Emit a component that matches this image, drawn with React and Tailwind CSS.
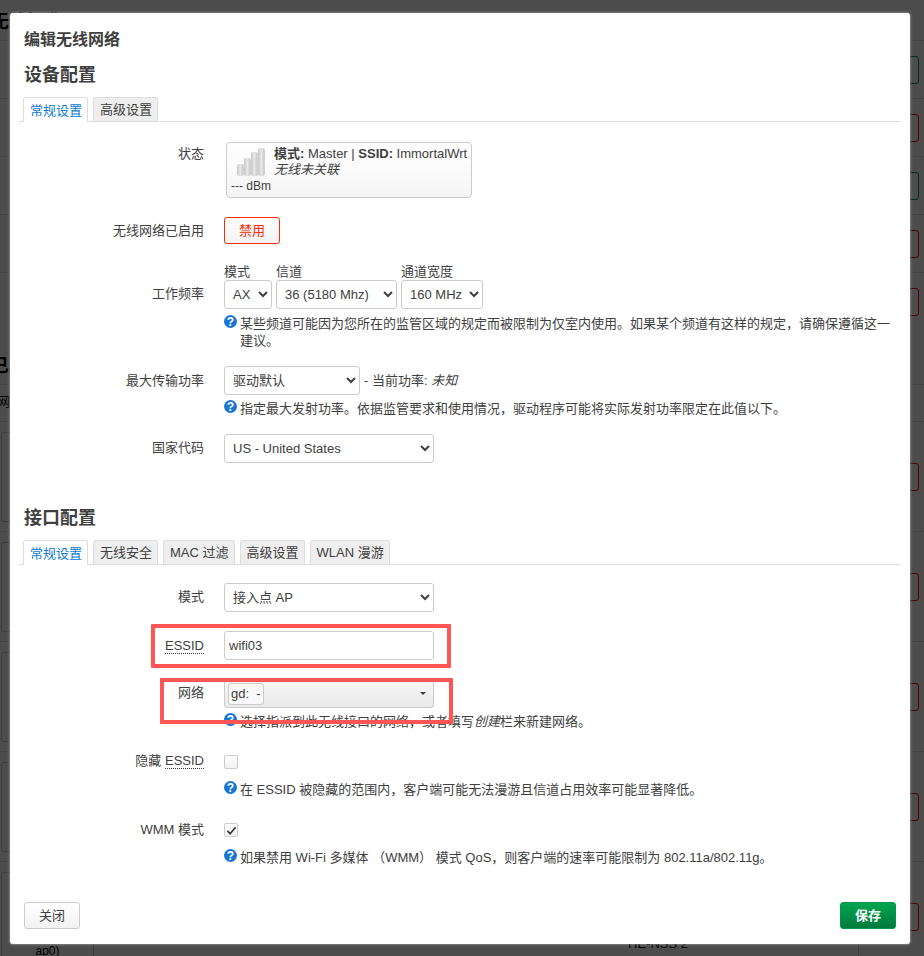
import React from "react";

const Help = ({ children, className = "" }) => (
  <div className={`flex items-start text-[13px] leading-[17px] text-[#404040] ${className}`}>
    <span className="mr-[3px] flex h-[13px] w-[13px] shrink-0 items-center justify-center rounded-full bg-[#1976d2] text-[12px] font-bold leading-none text-white">?</span>
    <span className="min-w-0 flex-1">{children}</span>
  </div>
);

const Row = ({ label, labelClass = "", className = "", children }) => (
  <div className={`flex items-start ${className}`}>
    <div className={`w-[180px] shrink-0 text-right text-[13px] leading-[17px] text-[#404040] ${labelClass}`}>{label}</div>
    <div className="ml-[20px] min-w-0 flex-1">{children}</div>
  </div>
);

const Select = ({ value, className = "" }) => (
  <select
    defaultValue={value}
    className={`block h-[29px] rounded-[3px] border border-[#ccc] bg-white pl-[4px] text-[13px] text-[#404040] outline-none ${className}`}
  >
    <option>{value}</option>
  </select>
);

const Tabs = ({ items, className = "" }) => (
  <div className={`-mx-[5px] flex items-end gap-[5px] border-b border-[#ddd] pl-[4px] ${className}`}>
    {items.map((t, i) => (
      <div
        key={t}
        className={
          i === 0
            ? "-mb-[1px] h-[25px] rounded-t-[3px] border border-b-0 border-[#ddd] bg-white pl-[6px] pr-[5px] text-[13px] leading-[25px] text-[#0b7ad1]"
            : "h-[24px] rounded-t-[3px] border border-b-0 border-[#ddd] bg-[#eeeeee] pl-[6px] pr-[5px] text-[13px] leading-[24px] text-[#404040]"
        }
      >
        {t}
      </div>
    ))}
  </div>
);

const Abbr = ({ children }) => <span className="border-b border-dotted border-[#404040] leading-[14px]">{children}</span>;

const Check = ({ checked, className = "" }) => (
  <div className={`flex h-[14px] w-[14px] items-center justify-center rounded-[2px] border border-[#ccc] bg-gradient-to-b from-[#fdfdfd] to-[#f2f2f2] ${className}`}>
    {checked && (
      <svg viewBox="0 0 12 12" className="h-[11px] w-[11px]" fill="none" stroke="#333" strokeWidth="1.8">
        <path d="M1.5 6.5 L4.5 9.5 L10.5 2.5" />
      </svg>
    )}
  </div>
);

const SignalIcon = () => (
  <svg viewBox="0 0 28 28" className="h-[28px] w-[28px]">
    <defs>
      <linearGradient id="bar" x1="0" x2="1" y1="0" y2="0">
        <stop offset="0" stopColor="#c8c8c8" />
        <stop offset="0.5" stopColor="#e8e8e8" />
        <stop offset="1" stopColor="#c4c4c4" />
      </linearGradient>
    </defs>
    <rect x="0" y="16" width="6.8" height="12" rx="2" fill="url(#bar)" />
    <rect x="7" y="10" width="6.8" height="18" rx="2" fill="url(#bar)" />
    <rect x="14" y="4" width="6.8" height="24" rx="2" fill="url(#bar)" />
    <rect x="21" y="0" width="6.8" height="28" rx="2" fill="url(#bar)" />
  </svg>
);

const BgButton = ({ color }) => <div className={`h-[28px] w-[60px] shrink-0 rounded-[3px] border ${color}`} />;

const BgRow = ({ color, last }) => (
  <div className={`flex h-[58px] items-center justify-end pr-[5px] ${last ? "" : "border-b border-[#ddd]"}`}>
    <BgButton color={color} />
  </div>
);

const BgCardRow = ({ children }) => (
  <div className="flex h-[110px] items-center justify-between border-b border-[#ddd] pl-[1px] pr-[5px]">
    <div className="flex h-[90px] w-[860px] rounded-[3px] border border-[#ccc]">{children}</div>
    <BgButton color="border-[#ff0000]" />
  </div>
);

export default function App() {
  return (
    <div className="relative h-[956px] w-[924px] overflow-hidden bg-white font-['Liberation_Sans','Noto_Sans_CJK_SC',sans-serif] text-[13px] text-[#404040]">
      {/* page under the dialog */}
      <div>
        <div className="h-[41px] overflow-hidden border-b border-[#ddd] pt-[9px] text-[18px] font-bold leading-[26px] text-black">
          <span className="-ml-[9px] block">无线概览</span>
        </div>
        <BgRow color="border-[#00a651]" />
        <BgRow color="border-[#ff0000]" />
        <BgRow color="border-[#00a651]" />
        <BgRow color="border-[#ff0000]" />
        <BgRow color="border-[#ff0000]" last />
        <div className="h-[54px] border-b border-[#ddd] pt-[22px] text-[18px] font-bold leading-[26px] text-black">
          <span className="-ml-[9px] block">已连接站点</span>
        </div>
        <div className="h-[37px] border-b border-[#ddd] pt-[8px] leading-[17px] text-black">
          <span className="-ml-[3px] block">网络</span>
        </div>
        <BgCardRow />
        <BgCardRow />
        <BgCardRow />
        <BgCardRow />
        <BgCardRow>
          <div className="flex w-[92px] items-end justify-center border-r border-[#bbb] pb-[2px] text-[12px] leading-[16px] text-black">ap0)</div>
          <div className="flex flex-1 items-end pb-[9px] pl-[534px] text-[13px] leading-[16px] text-black">HE-NSS 2</div>
        </BgCardRow>
      </div>

      {/* dimming layer */}
      <div className="absolute inset-0 bg-black/70" />

      {/* dialog */}
      <div className="absolute left-[10px] top-[13px] flex h-[931px] w-[900px] flex-col rounded-[3px] bg-white px-[14px] pb-[15px] pt-[15px] shadow-[0_0_3px_rgba(255,255,255,0.6)]">
        <h4 className="h-[24px] text-[16px] font-bold leading-[24px] text-[#404040]">编辑无线网络</h4>
        <h3 className="mt-[10px] h-[26px] text-[18px] font-bold leading-[26px] text-[#404040]">设备配置</h3>
        <Tabs className="mt-[9px]" items={["常规设置", "高级设置"]} />

        <Row label="状态" labelClass="pt-[3px]" className="mt-[20px]">
          <div className="ml-[2px] flex h-[56px] w-[246px] flex-col rounded-[4px] border border-[#ccc] bg-gradient-to-b from-white to-[#f5f5f5] pl-[4px] pt-[3px]">
            <div className="flex">
              <div className="ml-[6px] mr-[9px] mt-[2px] shrink-0"><SignalIcon /></div>
              <div className="whitespace-nowrap text-[13px] leading-[16px]">
                <div><b>模式:</b> Master | <b>SSID:</b> ImmortalWrt</div>
                <div className="italic">无线未关联</div>
              </div>
            </div>
            <div className="text-[12px] leading-[16px]">--- dBm</div>
          </div>
        </Row>

        <Row label="无线网络已启用" labelClass="pt-[5px]" className="mt-[19px]">
          <button className="h-[27px] w-[56px] rounded-[3px] border border-[#ff2a00] bg-gradient-to-b from-white to-[#f2f2f2] text-[13px] text-[#ff2a00]">禁用</button>
        </Row>

        <Row label="工作频率" labelClass="pt-[21px]" className="mt-[20px]">
          <div className="flex gap-[4px]">
            <div>
              <div className="h-[16px] text-[13px] leading-[16px]">模式</div>
              <Select value="AX" className="w-[48px]" />
            </div>
            <div>
              <div className="h-[16px] text-[13px] leading-[16px]">信道</div>
              <Select value="36 (5180 Mhz)" className="w-[121px]" />
            </div>
            <div>
              <div className="h-[16px] text-[13px] leading-[16px]">通道宽度</div>
              <Select value="160 MHz" className="w-[82px]" />
            </div>
          </div>
          <Help className="mt-[6px]">某些频道可能因为您所在的监管区域的规定而被限制为仅室内使用。如果某个频道有这样的规定，请确保遵循这一建议。</Help>
        </Row>

        <Row label="最大传输功率" labelClass="pt-[6px]" className="mt-[17px]">
          <div className="flex items-center">
            <Select value="驱动默认" className="w-[136px]" />
            <span className="ml-[4px]">- 当前功率: <i>未知</i></span>
          </div>
          <Help className="mt-[5px]">指定最大发射功率。依据监管要求和使用情况，驱动程序可能将实际发射功率限定在此值以下。</Help>
        </Row>

        <Row label="国家代码" labelClass="pt-[5px]" className="mt-[17px]">
          <Select value="US - United States" className="w-[210px]" />
        </Row>

        <h3 className="mt-[42px] h-[26px] text-[18px] font-bold leading-[26px] text-[#404040]">接口配置</h3>
        <Tabs className="mt-[9px]" items={["常规设置", "无线安全", "MAC 过滤", "高级设置", "WLAN 漫游"]} />

        <Row label="模式" labelClass="pt-[5px]" className="mt-[18px]">
          <Select value="接入点 AP" className="w-[210px]" />
        </Row>

        <Row label={<Abbr>ESSID</Abbr>} labelClass="pt-[6px]" className="mt-[19px]">
          <input
            readOnly
            value="wifi03"
            className="block h-[29px] w-[210px] rounded-[3px] border border-[#ccc] bg-white px-[4px] text-[13px] text-[#404040] outline-none"
          />
        </Row>

        <Row label="网络" labelClass="pt-[5px]" className="mt-[19px]">
          <div className="flex h-[29px] w-[210px] items-center justify-between rounded-[3px] border border-[#ccc] bg-gradient-to-b from-[#f7f7f7] to-[#eaeaea] pl-[3px] pr-[7px]">
            <span className="rounded-[3px] border border-[#ccc] bg-[#f8f8f8] px-[2px] text-[13px] leading-[20px]">gd:&nbsp; -</span>
            <span className="h-0 w-0 border-x-[3px] border-t-[3px] border-x-transparent border-t-[#404040]" />
          </div>
          <Help className="mt-[5px]">选择指派到此无线接口的网络，或者填写<i>创建</i>栏来新建网络。</Help>
        </Row>

        <Row label={<>隐藏 <Abbr>ESSID</Abbr></>} className="mt-[22px]">
          <Check className="mt-[3px]" />
          <Help className="mt-[12px]">在 ESSID 被隐藏的范围内，客户端可能无法漫游且信道占用效率可能显著降低。</Help>
        </Row>

        <Row label="WMM 模式" className="mt-[23px]">
          <Check checked className="mt-[2px]" />
          <Help className="mt-[12px]">如果禁用 Wi-Fi 多媒体 （WMM） 模式 QoS，则客户端的速率可能限制为 802.11a/802.11g。</Help>
        </Row>

        <div className="mt-auto flex justify-between">
          <button className="h-[27px] w-[56px] rounded-[3px] border border-[#ccc] bg-gradient-to-b from-white to-[#f2f2f2] text-[13px] text-[#404040]">关闭</button>
          <button className="h-[27px] w-[56px] rounded-[3px] border border-[#00964d] bg-gradient-to-b from-[#00a651] to-[#007a3d] text-[13px] font-bold text-white">保存</button>
        </div>
      </div>

      {/* hand-drawn annotation boxes */}
      <div className="absolute left-[151px] top-[624px] h-[44px] w-[300px] rounded-[1px] border-[4px] border-[#ff5555]" />
      <div className="absolute left-[160px] top-[678px] h-[46px] w-[293px] rounded-[1px] border-[4px] border-[#ff5555]" />
    </div>
  );
}
